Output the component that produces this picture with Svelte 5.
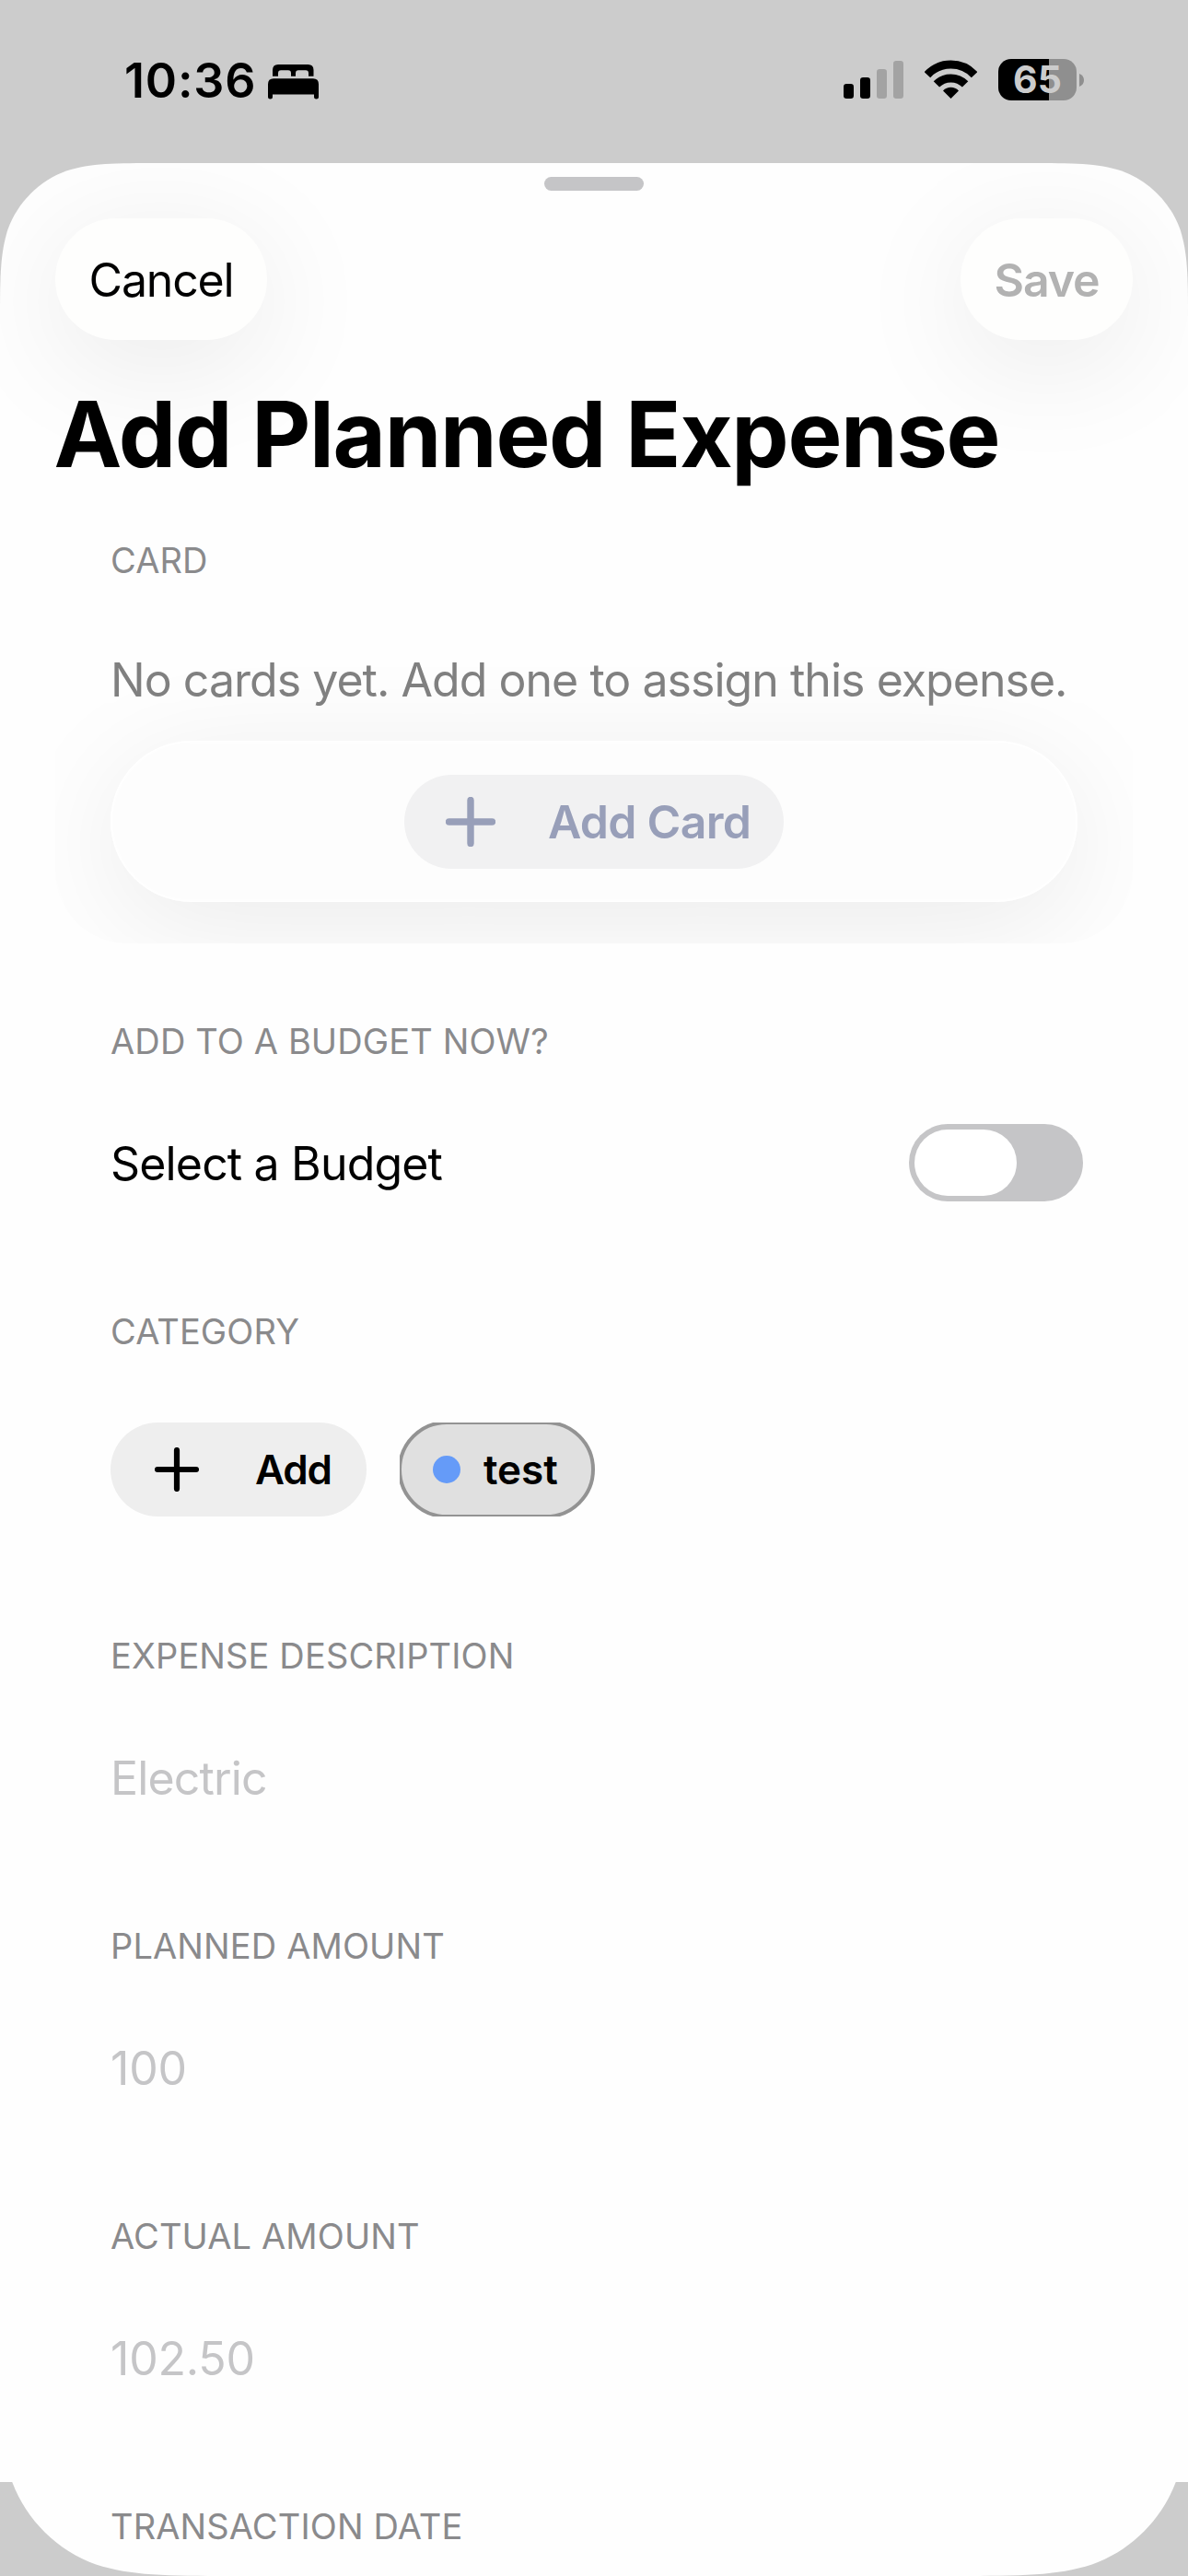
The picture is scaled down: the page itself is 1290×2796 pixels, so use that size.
<script>
  const fields = [
    { label: 'Expense Description', placeholder: 'Electric', numeric: false },
    { label: 'Planned Amount', placeholder: '100', numeric: true },
    { label: 'Actual Amount', placeholder: '102.50', numeric: true }
  ];
</script>

<div class="screen">
  <div class="status">
    <div class="clock">
      <span class="time">10:36</span>
      <svg class="bed" viewBox="0 0 55 38">
        <path d="M5 12.7V6Q5 0 11 0H43.5Q49.5 0 49.5 6V12.7H44V9.5Q44 6.3 41 6.3H33Q30 6.3 30 9.5V12.7H25V9.5Q25 6.3 22 6.3H14Q11 6.3 11 9.5V12.7Z" />
        <path d="M0 21.5Q0 15.3 6 15.3H49Q55 15.3 55 21.5V35Q55 37.5 52.5 37.5Q50 37.5 50 35V32.5H5V35Q5 37.5 2.5 37.5Q0 37.5 0 35Z" />
      </svg>
    </div>
    <div class="indicators">
      <svg class="signal" viewBox="0 0 65 41">
        <rect x="0" y="25" width="11" height="16" rx="3.2" />
        <rect x="18" y="18" width="11" height="23" rx="3.2" />
        <rect class="off" x="36" y="9" width="11" height="32" rx="3.2" />
        <rect class="off" x="54" y="0" width="11" height="41" rx="3.2" />
      </svg>
      <svg class="wifi" viewBox="0 0 57 42">
        <path class="arc" d="M2.9 16.2A35 35 0 0 1 54.1 16.2" />
        <path class="arc" d="M12.9 26.4A22 22 0 0 1 44.1 26.4" />
        <path d="M20 33.4A12 12 0 0 1 37 33.4L28.5 42Z" />
      </svg>
      <div class="battery">
        <div class="cell">65</div>
        <svg class="nub" viewBox="0 0 5 14"><path d="M0 0Q5 2 5 7Q5 12 0 14Z" /></svg>
      </div>
    </div>
  </div>

  <main class="sheet">
    <div class="grabber"></div>
    <header class="toolbar">
      <button class="glass cancel">Cancel</button>
      <button class="glass save">Save</button>
    </header>
    <h1>Add Planned Expense</h1>

    <section>
      <h2>Card</h2>
      <div class="group cards">
        <p class="hint">No cards yet. Add one to assign this expense.</p>
        <div class="pill">
          <button class="add-card">
            <svg class="plus" viewBox="0 0 54 54"><path d="M27 3.5V50.5M3.5 27H50.5" /></svg>
            <span>Add Card</span>
          </button>
        </div>
      </div>
    </section>

    <section>
      <h2>Add to a budget now?</h2>
      <div class="group row">
        <span class="body">Select a Budget</span>
        <div class="toggle"><div class="knob"></div></div>
      </div>
    </section>

    <section>
      <h2>Category</h2>
      <div class="group chips">
        <button class="chip add">
          <svg class="plus small" viewBox="0 0 48 48"><path d="M24 3V45M3 24H45" /></svg>
          <span class="tight">Add</span>
        </button>
        <div class="scroller">
          <button class="chip selected">
            <i class="dot"></i>
            <span>test</span>
          </button>
        </div>
      </div>
    </section>

    {#each fields as field}
      <section>
        <h2>{field.label}</h2>
        <div class="group row">
          <span class="body placeholder" class:numeric={field.numeric}>{field.placeholder}</span>
        </div>
      </section>
    {/each}

    <section>
      <h2>Transaction Date</h2>
    </section>
  </main>

  <svg class="corner" viewBox="0 151 253 102">
    <path d="M0 .8C0 73.4 0 109.7 12.4 148.8C27.9 191.5 61.5 225.1 104.2 240.6C143.3 253 179.6 253 252.2 253H0Z" />
  </svg>
  <svg class="corner right" viewBox="0 151 253 102">
    <path d="M0 .8C0 73.4 0 109.7 12.4 148.8C27.9 191.5 61.5 225.1 104.2 240.6C143.3 253 179.6 253 252.2 253H0Z" />
  </svg>
</div>

<style>
  :global(body) {
    margin: 0;
    background: #cccccc;
  }

  .screen {
    position: relative;
    width: 1290px;
    height: 2796px;
    overflow: hidden;
    background: #cccccc;
    color: #000;
    font-family: Inter, 'Liberation Sans', sans-serif;
  }

  .screen * {
    box-sizing: border-box;
  }

  svg {
    display: block;
    flex: none;
  }

  button {
    border: 0;
    padding: 0;
    margin: 0;
    font: inherit;
    color: inherit;
  }

  /* Status bar */
  .status {
    display: flex;
    justify-content: space-between;
    align-items: flex-start;
    height: 177px;
    padding: 58px 113px 0 135px;
  }

  .clock {
    display: flex;
    gap: 13px;
  }

  .time {
    width: 143px;
    font-size: 52px;
    font-weight: 600;
    line-height: 60px;
    letter-spacing: 0.8px;
    white-space: nowrap;
  }

  .bed {
    width: 55px;
    height: 38px;
    margin-top: 11.5px;
  }

  .indicators {
    display: flex;
    align-items: flex-end;
    padding-top: 6px;
  }

  .signal {
    width: 65px;
    height: 41px;
    margin: 0 23px 2px 0;
  }

  .signal .off {
    fill: #a3a3a3;
  }

  .wifi {
    width: 57px;
    height: 42px;
    margin: 0 23px 2px 0;
  }

  .arc {
    fill: none;
    stroke: #000;
    stroke-width: 9;
  }

  .battery {
    display: flex;
    align-items: center;
    gap: 3px;
  }

  .cell {
    width: 85px;
    height: 45px;
    border-radius: 14px;
    background: linear-gradient(90deg, #000 55px, #8f8f8f 55px);
    color: #cccccc;
    font-size: 41px;
    font-weight: 700;
    line-height: 45px;
    text-align: center;
  }

  .nub {
    width: 5px;
    height: 14px;
    fill: #8f8f8f;
  }

  /* Sheet */
  .sheet {
    height: 2619px;
    padding-top: 15px;
    background: #fefefe;
    clip-path: path('M0 174.3C0 124.1 0 99 8.5 72C19.3 42.5 42.5 19.3 72 8.5C99 0 124.1 0 174.3 0H1115.7C1165.9 0 1191 0 1218 8.5C1247.5 19.3 1270.7 42.5 1281.5 72C1290 99 1290 124.1 1290 174.3V2619H0Z');
  }

  .grabber {
    width: 108px;
    height: 15px;
    margin: 0 auto;
    border-radius: 7.5px;
    background: #c5c5c7;
  }

  .toolbar {
    display: flex;
    justify-content: space-between;
    padding: 30px 60px 0;
  }

  .glass {
    height: 132px;
    border-radius: 66px;
    background: #fefefd;
    box-shadow: 0 24px 130px rgba(0, 0, 0, 0.085);
    font-size: 50px;
    line-height: 134px;
  }

  .cancel {
    width: 230px;
    letter-spacing: -1.2px;
  }

  .save {
    width: 187px;
    color: #b2b2b2;
    font-weight: 600;
    letter-spacing: -1.1px;
  }

  h1 {
    position: relative;
    margin: 42px 58.5px 54px;
    font-size: 99px;
    font-weight: 700;
    line-height: 120px;
    letter-spacing: -1.3px;
    white-space: nowrap;
  }

  section {
    margin-bottom: 83px;
  }

  h2 {
    margin: 0 120px 32px;
    color: #8a8a8c;
    font-size: 38px;
    font-weight: 400;
    line-height: 46px;
    letter-spacing: 0.12px;
    text-transform: uppercase;
  }

  .group {
    margin: 0 60px;
    padding: 0 60px;
  }

  .row {
    display: flex;
    justify-content: space-between;
    align-items: center;
    height: 154px;
    padding-right: 54px;
  }

  .body,
  .hint {
    font-size: 50px;
    line-height: 60px;
    white-space: nowrap;
  }

  .body {
    padding-top: 2px;
    letter-spacing: -0.84px;
  }

  .placeholder {
    color: #c5c5c7;
  }

  .numeric {
    letter-spacing: -0.2px;
  }

  /* Card picker */
  .cards {
    height: 361px;
    padding-top: 45px;
    overflow: hidden;
    border-radius: 78px;
  }

  .hint {
    position: relative;
    z-index: 1;
    margin: 0 0 36px;
    color: #808080;
    letter-spacing: -0.96px;
  }

  .pill {
    display: flex;
    align-items: center;
    justify-content: center;
    height: 175px;
    border-radius: 88px;
    background: #fdfdfd;
    box-shadow:
      0 24px 130px rgba(0, 0, 0, 0.078),
      inset 0 0 3px 2px #fff;
  }

  .add-card {
    display: flex;
    align-items: center;
    gap: 57px;
    width: 412px;
    height: 102px;
    padding-left: 45px;
    border-radius: 51px;
    background: #f1f1f2;
    color: #989fb9;
    font-size: 50px;
    font-weight: 600;
    line-height: 60px;
    letter-spacing: -0.75px;
    white-space: nowrap;
  }

  .plus {
    width: 54px;
    height: 54px;
    fill: none;
    stroke: currentColor;
    stroke-width: 7.4;
    stroke-linecap: round;
  }

  .small {
    width: 48px;
    height: 48px;
    stroke-width: 6.2;
  }

  /* Toggle */
  .toggle {
    width: 189px;
    height: 84px;
    padding: 6px;
    border-radius: 42px;
    background: #c5c5c7;
  }

  .knob {
    width: 111px;
    height: 72px;
    border-radius: 36px;
    background: #fff;
  }

  /* Category chips */
  .chips {
    display: flex;
    gap: 36px;
    height: 191px;
    padding-top: 44px;
  }

  .chip {
    display: flex;
    align-items: center;
    height: 102px;
    border-radius: 51px;
    font-size: 44px;
    font-weight: 600;
    line-height: 54px;
  }

  .add {
    gap: 61px;
    width: 278px;
    padding-left: 48px;
    background: #eeeeee;
  }

  .tight {
    letter-spacing: -1.2px;
  }

  .scroller {
    width: 696px;
    height: 102px;
    overflow: hidden;
  }

  .selected {
    position: relative;
    gap: 25px;
    width: 210px;
    padding-left: 36px;
    background: #e0e0e0;
  }

  .selected::after {
    content: '';
    position: absolute;
    inset: -2.25px;
    border: 4.5px solid #939393;
    border-radius: 54px;
  }

  .dot {
    width: 30px;
    height: 30px;
    border-radius: 50%;
    background: #659bf8;
  }

  /* Rounded display edge under the sheet */
  .corner {
    position: absolute;
    left: 0;
    bottom: 0;
    width: 253px;
    height: 102px;
    fill: #cccccc;
  }

  .right {
    right: 0;
    left: auto;
    transform: scaleX(-1);
  }
</style>
